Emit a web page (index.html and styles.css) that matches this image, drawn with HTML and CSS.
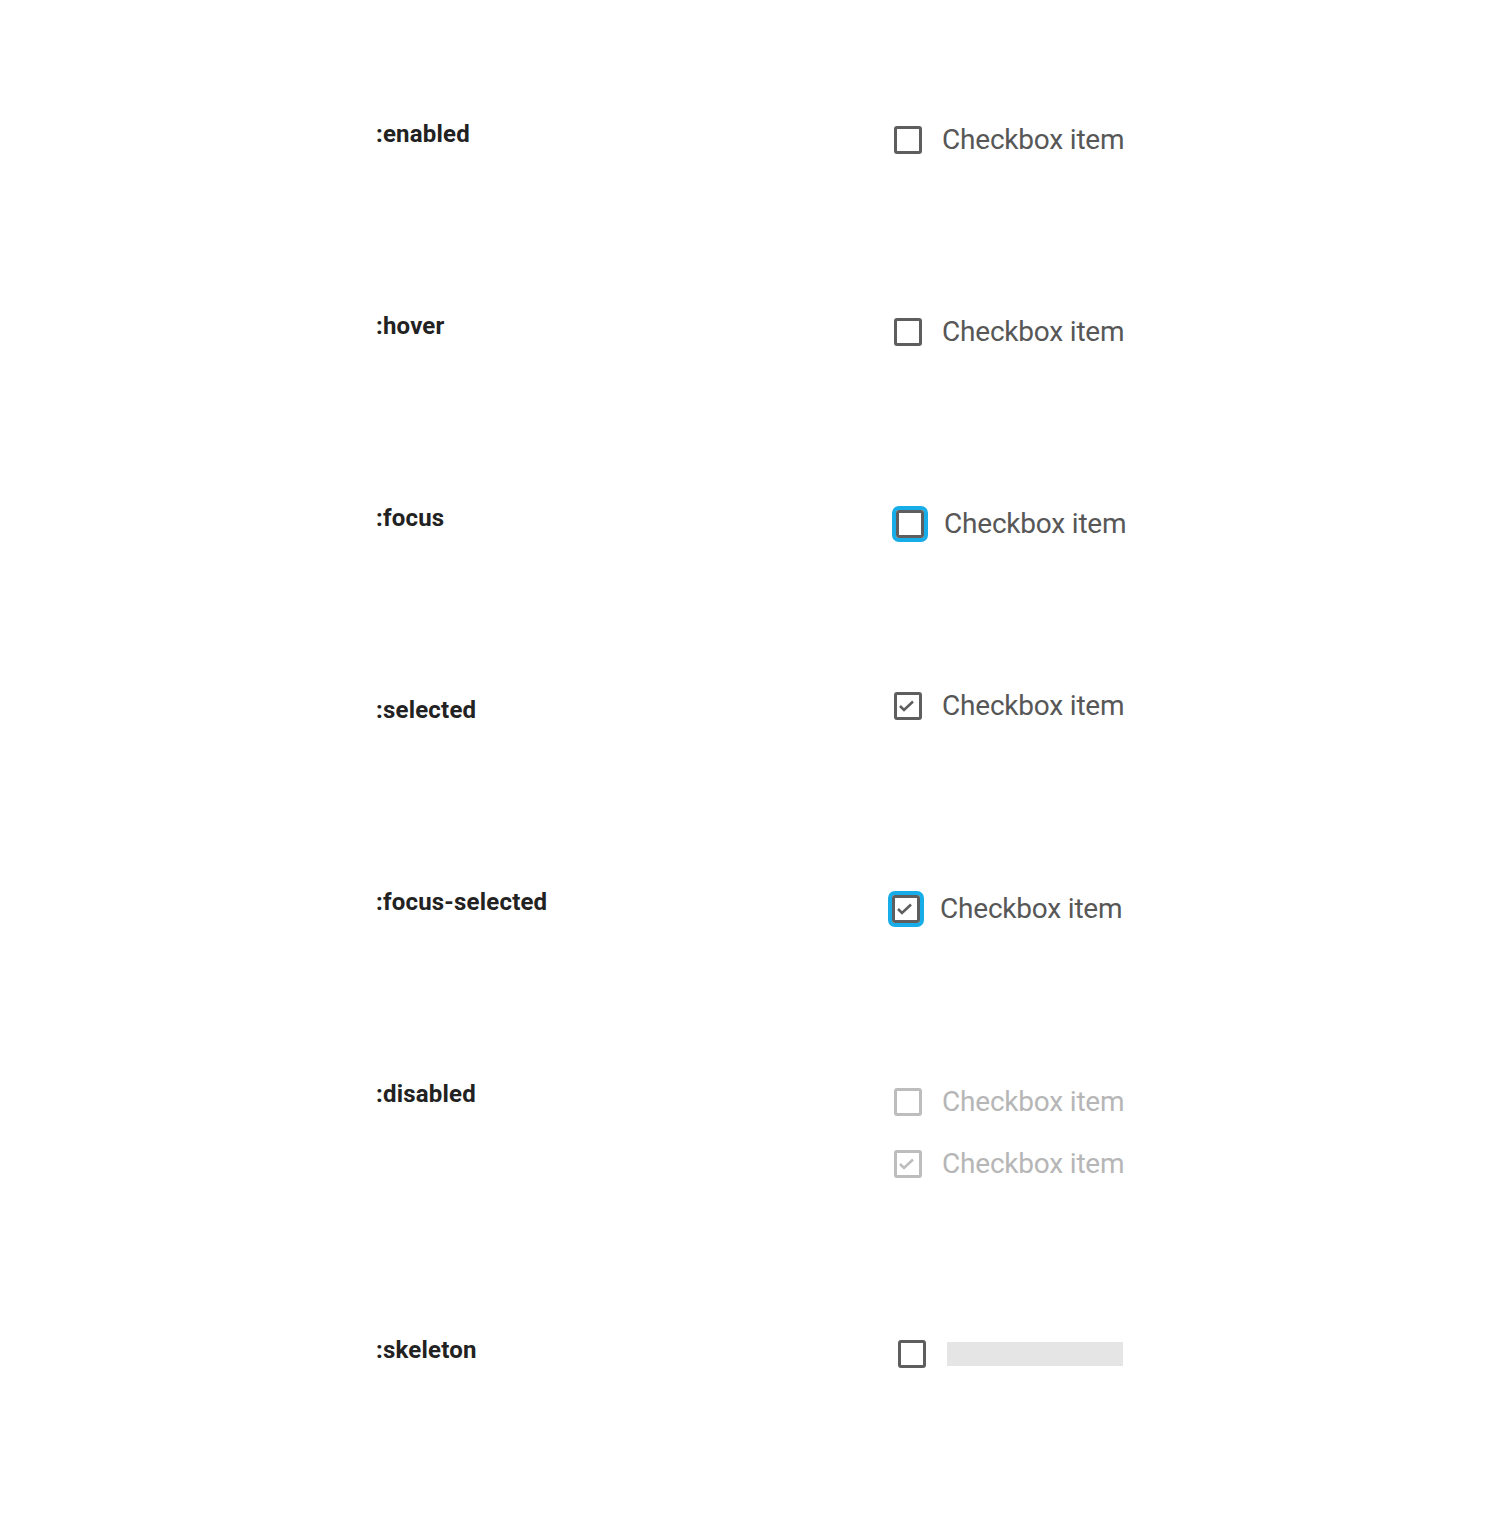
FILE: index.html
```html
<!DOCTYPE html>
<html lang="en">
<head>
<meta charset="utf-8">
<title>Checkbox states</title>
<link rel="stylesheet" href="styles.css">
</head>
<body>
<main class="states">
  <section class="row">
    <div class="label">:enabled</div>
    <div class="items">
      <label class="cb"><span class="box"></span><span class="text">Checkbox item</span></label>
    </div>
  </section>
  <section class="row">
    <div class="label">:hover</div>
    <div class="items">
      <label class="cb"><span class="box"></span><span class="text">Checkbox item</span></label>
    </div>
  </section>
  <section class="row">
    <div class="label">:focus</div>
    <div class="items">
      <label class="cb cb-focus cb-shift-right"><span class="box"></span><span class="text">Checkbox item</span></label>
    </div>
  </section>
  <section class="row">
    <div class="label">:selected</div>
    <div class="items items-up">
      <label class="cb"><span class="box"><svg class="check" viewBox="0 0 22 22"><path d="M3 11 L7 15 L16 6.5"/></svg></span><span class="text">Checkbox item</span></label>
    </div>
  </section>
  <section class="row">
    <div class="label">:focus-selected</div>
    <div class="items">
      <label class="cb cb-focus cb-shift-left"><span class="box"><svg class="check" viewBox="0 0 22 22"><path d="M3 11 L7 15 L16 6.5"/></svg></span><span class="text">Checkbox item</span></label>
    </div>
  </section>
  <section class="row row-tall">
    <div class="label">:disabled</div>
    <div class="items items-down">
      <label class="cb cb-disabled"><span class="box"></span><span class="text">Checkbox item</span></label>
      <label class="cb cb-disabled"><span class="box"><svg class="check" viewBox="0 0 22 22"><path d="M3 11 L7 15 L16 6.5"/></svg></span><span class="text">Checkbox item</span></label>
    </div>
  </section>
  <section class="row">
    <div class="label">:skeleton</div>
    <div class="items">
      <div class="cb cb-skeleton"><span class="box"></span><span class="bar"></span></div>
    </div>
  </section>
</main>
</body>
</html>
```

FILE: styles.css
```css
html, body {
  margin: 0;
  padding: 0;
  background: #ffffff;
}

body {
  font-family: Roboto, "Liberation Sans", Arial, sans-serif;
}

.states {
  width: 758px;
  margin: 0 auto;
  padding-top: 120px;
}

.row {
  display: grid;
  grid-template-columns: 518px 1fr;
  height: 192px;
  align-items: start;
}

.row-tall {
  height: 256px;
}

.label {
  font-size: 24px;
  line-height: 28px;
  font-weight: 700;
  letter-spacing: 0.2px;
  color: #222222;
}

.items {
  display: flex;
  flex-direction: column;
  gap: 22px;
}

.items-up {
  margin-top: -10px;
}

.items-down {
  margin-top: 2px;
}

.cb {
  display: flex;
  align-items: center;
  height: 40px;
  gap: 20px;
}

.box {
  box-sizing: border-box;
  width: 28px;
  height: 28px;
  border: 3px solid #5e5e5e;
  border-radius: 3px;
  flex: none;
  display: flex;
}

.check {
  width: 22px;
  height: 22px;
  fill: none;
  stroke: #5e5e5e;
  stroke-width: 2.5;
}

.text {
  font-size: 28px;
  line-height: 40px;
  letter-spacing: -0.2px;
  color: #575757;
}

.cb-focus .box {
  box-shadow: 0 0 0 4px #17ade8;
  border-radius: 3px;
}

.cb-shift-right {
  margin-left: 2px;
}

.cb-shift-left {
  margin-left: -2px;
  margin-top: 1px;
}

.cb-disabled .box {
  border-color: #bdbdbd;
}

.cb-disabled .check {
  stroke: #bdbdbd;
}

.cb-disabled .text {
  color: #b6b6b6;
}

.cb-skeleton {
  margin-left: 4px;
  margin-top: -2px;
  gap: 21px;
}

.bar {
  width: 176px;
  height: 24px;
  background: #e5e5e5;
}
```
